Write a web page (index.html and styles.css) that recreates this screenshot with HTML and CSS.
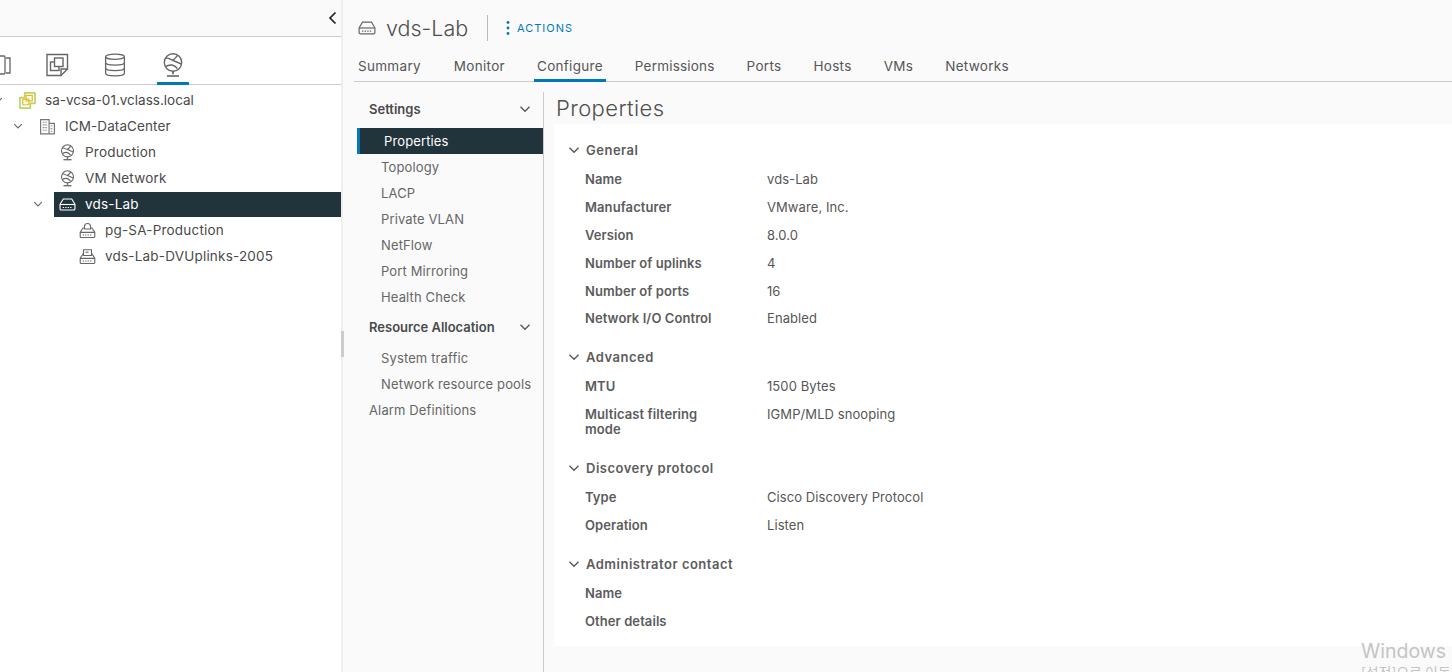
FILE: index.html
```html
<!DOCTYPE html>
<html lang="en">
<head>
<meta charset="utf-8">
<title>vds-Lab Properties</title>
<link rel="stylesheet" href="styles.css">
</head>
<body>
<svg class="defs" width="0" height="0" aria-hidden="true">
  <symbol id="chev" viewBox="0 0 12 12"><path d="M1.500 3.800 6 8.300l4.500-4.500" fill="none" stroke="currentColor" stroke-width="1.300"/></symbol>
  <symbol id="net" viewBox="0 0 17 17">
    <g fill="none" stroke="currentColor" stroke-width="1.100"><circle cx="8.500" cy="6.800" r="6"/><path d="M3.200 4.300c2-1 3 .8 4.800 1 1.500.2 2.500-2 3.800-3.300M8 5.300l6.200 2.700M3.200 9.700c2.800-1.800 6.200-1.800 8.300 1.400"/><path d="M8.500 12.800v2" stroke-width="1.500"/><path d="M4.500 15.700h8" stroke-width="1.300"/></g>
  </symbol>
  <symbol id="vds" viewBox="0 0 18 14">
    <g fill="none" stroke="currentColor" stroke-width="1.200"><path d="M4.500 1.200h9l3.400 5.600v4.600a1.400 1.400 0 0 1-1.400 1.400h-13a1.400 1.400 0 0 1-1.400-1.400V6.800z"/><path d="M1.200 7h15.600"/><path d="M4 10.200h10" stroke-dasharray="1.400 1.200"/></g>
  </symbol>
  <symbol id="pg" viewBox="0 0 17 17">
    <g fill="none" stroke="currentColor" stroke-width="1.100"><path d="M5.500 7V4.500a3 3 0 0 1 6 0V7z"/><path d="M5 6H4L1.200 10.200v4.300c0 .6.500 1 1 1h12.600c.5 0 1-.4 1-1v-4.300L13 6h-1M1.200 10.400h14.600"/><path d="M3.800 13h9.400" stroke-dasharray="1.300 1.100"/></g>
  </symbol>
  <symbol id="up" viewBox="0 0 17 17">
    <g fill="none" stroke="currentColor" stroke-width="1.100"><path d="M4.500 7.500V1.800h8v5.700z"/><path d="M6.500 4.200h3"/><path d="M4.500 6H4L1.200 10.200v4.300c0 .6.500 1 1 1h12.600c.5 0 1-.4 1-1v-4.300L13 6h-.5M1.200 10.400h14.600"/><path d="M3.800 13h9.400" stroke-dasharray="1.300 1.100"/></g>
  </symbol>
</svg>

<div class="page">
  <aside class="nav">
    <div class="collapse-bar">
      <svg class="collapse-icon" viewBox="0 0 10 14"><path d="M7.500 1.500 2 7l5.500 5.500" fill="none" stroke="currentColor" stroke-width="1.700"/></svg>
    </div>
    <div class="icon-tabs">
      <div class="icon-tab">
        <svg class="tab-svg" viewBox="0 0 24 24"><g fill="none" stroke="currentColor" stroke-width="1.300"><rect x="1" y="3" width="17" height="18" rx="1"/><path d="M19 5h4v15h-4M4 7h4M4 10h4"/></g></svg>
      </div>
      <div class="icon-tab">
        <svg class="tab-svg" viewBox="0 0 24 24"><g fill="none" stroke="currentColor" stroke-width="1.400"><path d="M2 1.500h20.500V16L16 22.500H2z"/><path d="M16 22.500V16h6.500"/><rect x="5.500" y="9" width="8.500" height="8.500"/><rect x="9.500" y="5" width="8.500" height="8.500" fill="#fff"/></g></svg>
      </div>
      <div class="icon-tab">
        <svg class="tab-svg" viewBox="0 0 24 24"><g fill="none" stroke="currentColor" stroke-width="1.300"><ellipse cx="12" cy="3.800" rx="9.400" ry="2.600"/><path d="M2.600 3.800v16.400c0 1.500 4.200 2.600 9.400 2.600s9.400-1.100 9.400-2.600V3.800M2.600 9.500c0 1.500 4.200 2.600 9.400 2.600s9.400-1.100 9.400-2.600M2.600 15c0 1.500 4.200 2.600 9.400 2.600s9.400-1.100 9.400-2.600"/></g></svg>
      </div>
      <div class="icon-tab active">
        <svg class="tab-svg" viewBox="0 0 24 24"><g fill="none" stroke="currentColor" stroke-width="1.400"><circle cx="12" cy="9.500" r="8.700"/><path d="M4.500 5.500c2.800-1.500 4.200 1.200 6.800 1.500 2.200.2 3.600-3 5.400-4.700M11 7l9.300 4M4.300 13.700c4-2.600 9-2.600 12 2"/><path d="M12 18.300v3" stroke-width="1.800"/><path d="M6 23h12" stroke-width="1.600"/></g></svg>
      </div>
    </div>
    <ul class="tree">
      <li class="tree-row lvl0"><span class="slot"><svg class="chev-s"><use href="#chev"/></svg></span>
        <div class="tree-item">
          <svg class="logo" viewBox="0 0 18 18"><path d="M6 1h10.500A.5.500 0 0 1 17 1.500V12h-5v5H1.500a.5.500 0 0 1-.5-.5V6h5z" fill="none" stroke="#b4d66a" stroke-width="1.800" stroke-linejoin="round"/><path d="M7.500 3.500h6.500v6H7.500zM4 7.500h6.500v6H4z" fill="none" stroke="#efb91c" stroke-width="1.300"/></svg>
          <span>sa-vcsa-01.vclass.local</span>
        </div></li>
      <li class="tree-row lvl1"><span class="slot"><svg class="chev-s"><use href="#chev"/></svg></span>
        <div class="tree-item">
          <svg class="icon" viewBox="0 0 16 16"><g fill="none" stroke="#777" stroke-width="1.100"><path d="M1.500 15V1.500h8V15M9.500 5h5v10M1 15h14"/><path d="M3.500 4h4M3.500 6.500h4M3.500 9h4M3.500 11.500h4M11 7.500h2M11 10h2M11 12.500h2" stroke-dasharray="1 .7"/></g></svg>
          <span>ICM-DataCenter</span>
        </div></li>
      <li class="tree-row lvl2"><span class="slot"></span>
        <div class="tree-item"><svg class="icon"><use href="#net"/></svg><span>Production</span></div></li>
      <li class="tree-row lvl2"><span class="slot"></span>
        <div class="tree-item"><svg class="icon"><use href="#net"/></svg><span>VM Network</span></div></li>
      <li class="tree-row lvl2"><span class="slot"><svg class="chev-s"><use href="#chev"/></svg></span>
        <div class="tree-item selected"><svg class="icon"><use href="#vds"/></svg><span>vds-Lab</span></div></li>
      <li class="tree-row lvl3"><span class="slot"></span>
        <div class="tree-item"><svg class="icon"><use href="#pg"/></svg><span>pg-SA-Production</span></div></li>
      <li class="tree-row lvl3"><span class="slot"></span>
        <div class="tree-item"><svg class="icon"><use href="#up"/></svg><span>vds-Lab-DVUplinks-2005</span></div></li>
    </ul>
  </aside>

  <div class="splitter"><div class="grip"></div></div>

  <main class="main">
    <header class="obj-head">
      <svg class="obj-icon"><use href="#vds"/></svg>
      <h1 class="obj-title">vds-Lab</h1>
      <div class="obj-sep"></div>
      <div class="actions">
        <svg class="dots" viewBox="0 0 4 16"><circle cx="2" cy="2.500" r="1.400"/><circle cx="2" cy="8" r="1.400"/><circle cx="2" cy="13.500" r="1.400"/></svg>
        <span>ACTIONS</span>
      </div>
    </header>
    <nav class="tabs">
      <span class="tab">Summary</span>
      <span class="tab">Monitor</span>
      <span class="tab active">Configure</span>
      <span class="tab">Permissions</span>
      <span class="tab">Ports</span>
      <span class="tab">Hosts</span>
      <span class="tab">VMs</span>
      <span class="tab">Networks</span>
    </nav>
    <div class="body">
      <div class="side">
        <div class="side-head"><span>Settings</span><svg class="chev"><use href="#chev"/></svg></div>
        <div class="side-item current">Properties</div>
        <div class="side-item">Topology</div>
        <div class="side-item">LACP</div>
        <div class="side-item">Private VLAN</div>
        <div class="side-item">NetFlow</div>
        <div class="side-item">Port Mirroring</div>
        <div class="side-item">Health Check</div>
        <div class="side-head second"><span>Resource Allocation</span><svg class="chev"><use href="#chev"/></svg></div>
        <div class="side-item">System traffic</div>
        <div class="side-item">Network resource pools</div>
        <div class="side-item top">Alarm Definitions</div>
      </div>
      <div class="content">
        <h2 class="page-title">Properties</h2>
        <div class="card">
          <section class="sec">
            <h3 class="sec-head"><svg class="chev"><use href="#chev"/></svg>General</h3>
            <div class="prop"><b>Name</b><span>vds-Lab</span></div>
            <div class="prop"><b>Manufacturer</b><span>VMware, Inc.</span></div>
            <div class="prop"><b>Version</b><span>8.0.0</span></div>
            <div class="prop"><b>Number of uplinks</b><span>4</span></div>
            <div class="prop"><b>Number of ports</b><span>16</span></div>
            <div class="prop"><b>Network I/O Control</b><span>Enabled</span></div>
          </section>
          <section class="sec">
            <h3 class="sec-head"><svg class="chev"><use href="#chev"/></svg>Advanced</h3>
            <div class="prop"><b>MTU</b><span>1500 Bytes</span></div>
            <div class="prop"><b>Multicast filtering mode</b><span>IGMP/MLD snooping</span></div>
          </section>
          <section class="sec">
            <h3 class="sec-head"><svg class="chev"><use href="#chev"/></svg>Discovery protocol</h3>
            <div class="prop"><b>Type</b><span>Cisco Discovery Protocol</span></div>
            <div class="prop"><b>Operation</b><span>Listen</span></div>
          </section>
          <section class="sec">
            <h3 class="sec-head"><svg class="chev"><use href="#chev"/></svg>Administrator contact</h3>
            <div class="prop"><b>Name</b><span></span></div>
            <div class="prop"><b>Other details</b><span></span></div>
          </section>
        </div>
      </div>
    </div>
  </main>
</div>
<div class="watermark">
  <div class="wm-1">Windows</div>
  <div class="wm-2">[설정]으로 이동하여 Windows를 정품 인증합니다.</div>
</div>
</body>
</html>
```
FILE: styles.css
```css
* { box-sizing: border-box; }
html, body { margin: 0; height: 100%; overflow: hidden; }
body { font-family: Inter, "Noto Sans", sans-serif; font-size: 13px; color: #565656; background: #fafafa; }
h1, h2, h3, ul { margin: 0; padding: 0; list-style: none; font-weight: 400; }
.defs { position: absolute; }

.page { display: flex; height: 672px; }

/* Left navigator */
.nav { width: 341px; flex: none; background: #fff; overflow: hidden; }
.collapse-bar { height: 37px; background: #fafafa; border-bottom: 1px solid #ccc; display: flex; justify-content: flex-end; align-items: center; padding-right: 3px; }
.collapse-icon { width: 10px; height: 14px; color: #222; }
.icon-tabs { height: 48px; border-bottom: 1px solid #ccc; display: flex; gap: 26px; margin-left: -17px; }
.icon-tab { width: 32px; height: 48px; display: flex; justify-content: center; align-items: flex-start; padding-top: 16px; color: #666; }
.icon-tab.active { border-bottom: 3px solid #0079b8; }
.tab-svg { width: 24px; height: 24px; }
.tree { padding-top: 2px; }
.tree-row { display: flex; height: 26px; align-items: center; font-size: 13.500px; letter-spacing: .2px; color: #4a4a4a; }
.slot { width: 32px; flex: none; height: 26px; display: flex; align-items: center; justify-content: center; color: #666; }
.lvl0 { letter-spacing: 0; }
.lvl1 { letter-spacing: .1px; }
.lvl0 .slot { margin-left: -18px; }
.lvl1 .slot { margin-left: 2px; }
.lvl2 .slot { margin-left: 22px; }
.lvl3 .slot { margin-left: 42px; }
.chev-s { width: 10px; height: 10px; }
.tree-item { flex: 1; height: 26px; display: flex; align-items: center; gap: 9px; padding-left: 5px; color: #4a4a4a; }
.tree-item.selected { background: #21333b; color: #fff; height: 25px; }
.icon { width: 17px; height: 17px; flex: none; color: #666; }
.selected .icon { color: #fff; }
.logo { width: 17px; height: 17px; flex: none; }

.splitter { width: 2px; flex: none; background: #eee; position: relative; }
.grip { position: absolute; left: 0; top: 331px; width: 3px; height: 26px; background: #ccc; }

/* Main pane */
.main { flex: 1; min-width: 0; display: flex; flex-direction: column; padding-left: 11px; }
.obj-head { height: 56px; display: flex; align-items: center; padding-left: 4px; }
.obj-icon { width: 18px; height: 14px; color: #666; margin-right: 10px; }
.obj-title { font-size: 21.500px; font-weight: 300; color: #4f4f4f; width: 101px; }
.obj-sep { width: 1px; height: 26px; background: #bbb; margin-right: 18px; }
.actions { display: flex; align-items: center; gap: 7px; color: #0079b8; font-size: 11px; letter-spacing: 1px; }
.dots { width: 4px; height: 16px; fill: #0079b8; }
.tabs { height: 26px; display: flex; gap: 26px; padding-left: 1px; border-bottom: 1px solid #ccc; }
.tab { padding: 0 3px; height: 26px; line-height: 20px; font-size: 13.500px; letter-spacing: .3px; color: #565656; }
.tab:first-child { margin-right: 1px; }
.tab:nth-child(4) { letter-spacing: .2px; }
.tab.active { border-bottom: 3px solid #0079b8; }

.body { flex: 1; display: flex; min-height: 0; margin-left: 3px; }
.side { width: 187px; flex: none; margin-top: 10px; border-right: 1px solid #ccc; }
.side-head { height: 36px; padding: 0 12px 2px; display: flex; align-items: center; justify-content: space-between; font-weight: 600; font-size: 13px; color: #4a4a4a; }
.side-head.second { margin-top: 1px; height: 34px; }
.chev { width: 12px; height: 12px; color: #555; flex: none; }
.side-item { height: 26px; line-height: 26px; padding-left: 24px; color: #666; font-size: 13px; letter-spacing: .13px; white-space: nowrap; }
.side-item.current { background: #21333b; color: #fff; border-left: 3px solid #0079b8; }
.side-item.top { padding-left: 12px; }

.content { flex: 1; min-width: 0; padding-left: 10px; }
.page-title { font-size: 22px; font-weight: 300; height: 42px; line-height: 30px; padding: 11px 0 0 2px; letter-spacing: .4px; color: #4f4f4f; }
.card { background: #fff; height: 522px; padding-top: 13px; }
.sec { padding-bottom: 11.400px; }
.sec-head { display: flex; align-items: center; gap: 6px; height: 26px; margin-bottom: 3px; padding-left: 14px; font-size: 13px; font-weight: 600; color: #5c5c5c; letter-spacing: .5px; }
.prop { display: grid; grid-template-columns: 182px 1fr; padding: 6.400px 0 6.400px 31px; line-height: 15px; font-size: 13px; letter-spacing: .08px; }
.prop b { font-weight: 600; color: #5c5c5c; max-width: 140px; }
.watermark { position: absolute; left: 1361px; top: 639px; white-space: nowrap; color: #c4c4c4; }
.wm-1 { font-size: 19.500px; line-height: 24px; }
.wm-2 { font-size: 14px; font-family: "Noto Sans CJK KR", sans-serif; line-height: 18px; }
```
